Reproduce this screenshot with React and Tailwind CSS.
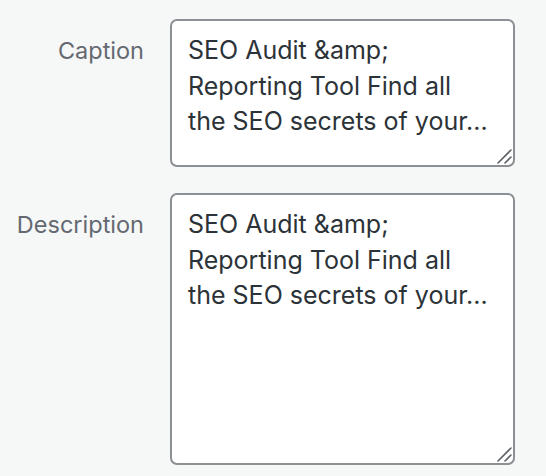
const TEXT = 'SEO Audit &amp; Reporting Tool Find all the SEO secrets of your...'

const FIELDS = [
  { label: 'Caption', height: 'h-[148px]' },
  { label: 'Description', height: 'h-[272px]' },
]

function Grip() {
  return (
    <svg className="pointer-events-none absolute right-[3px] bottom-[3px] h-[15px] w-[15px]" viewBox="0 0 15 15" fill="none">
      <path d="M14 1 L1 14 M14 8 L8 14" stroke="#5d6166" strokeWidth="1.6" strokeLinecap="round" />
    </svg>
  )
}

export default function App() {
  return (
    <div className="min-h-screen w-full bg-[#f6f7f7] pt-[19px] font-['Inter','Liberation_Sans',sans-serif]">
      <div className="flex flex-col gap-[26px]">
        {FIELDS.map(f => (
          <div key={f.label} className="flex items-start">
            <label className="w-[144px] shrink-0 pt-[18px] text-right text-[23.5px] leading-[28px] text-[#646970]">
              {f.label}
            </label>
            <div className="relative ml-[26px]">
              <textarea
                readOnly
                defaultValue={TEXT}
                className={`block w-[345px] ${f.height} resize-none rounded-[7px] border-2 border-[#8c8f94] bg-white pl-[16px] pr-[25px] pt-[12px] text-[25px] leading-[35.5px] text-[#2c3338] outline-none`}
              />
              <Grip />
            </div>
          </div>
        ))}
      </div>
    </div>
  )
}
